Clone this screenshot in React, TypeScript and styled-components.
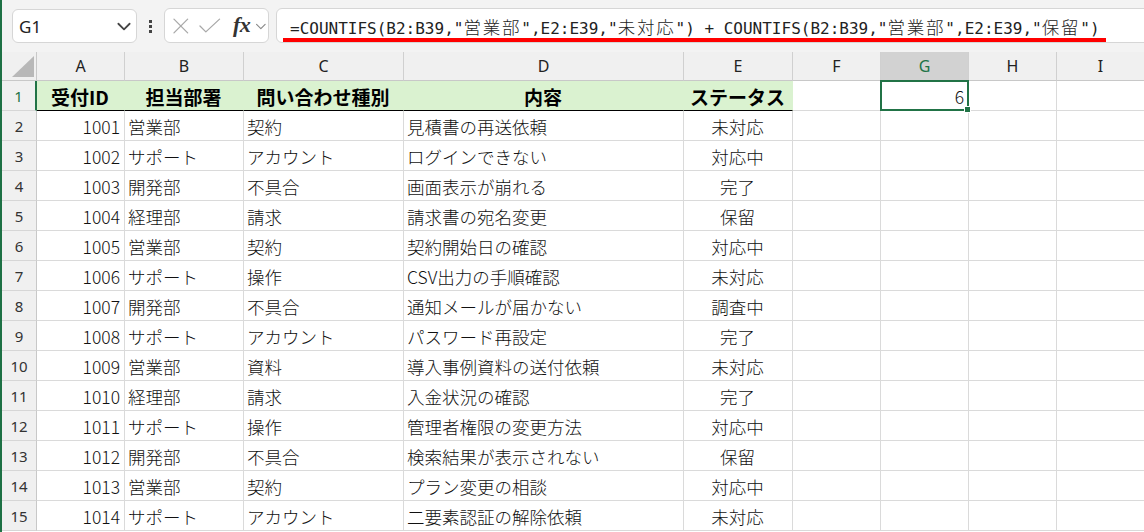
import React from 'react';
import styled, { createGlobalStyle, css } from 'styled-components';

const GlobalStyle = createGlobalStyle`
	html, body {
		margin: 0;
		padding: 0;
		overflow: hidden;
		background: #ffffff;
	}
	* {
		box-sizing: border-box;
	}
`;

const GREEN = '#217346';
const GRID = '#dadada';
const HEAD_BG = '#f0f0f0';

const Window = styled.div`
	width: 1144px;
	height: 532px;
	overflow: hidden;
	border-left: 2px solid #1e7145;
	background: #ffffff;
	display: flex;
	flex-direction: column;
	font-family: 'Noto Sans CJK JP', 'Noto Sans', sans-serif;
`;

const Toolbar = styled.div`
	height: 52px;
	flex: none;
	background: #f3f3f3;
	display: flex;
	align-items: flex-start;
	padding: 9px 0 0 10px;
`;

const NameBox = styled.div`
	width: 125px;
	height: 34px;
	background: #ffffff;
	border: 1px solid #d6d6d6;
	border-radius: 6px;
	display: flex;
	align-items: center;
	justify-content: space-between;
	padding: 0 3px 0 6px;
	font-family: 'Noto Sans', sans-serif;
	font-size: 17px;
	color: #222;
`;

const DotsHandle = styled.div`
	width: 27px;
	height: 34px;
	display: flex;
	flex-direction: column;
	align-items: center;
	justify-content: center;
	gap: 2px;
`;

const Dot = styled.span`
	width: 3px;
	height: 3px;
	background: #444;
`;

const FxBox = styled.div`
	width: 105px;
	height: 35px;
	margin-top: -1px;
	background: #ffffff;
	border: 1px solid #d6d6d6;
	border-radius: 6px;
	display: flex;
	align-items: center;
	padding: 0 0 0 7px;
`;

const IconGap = styled.span`
	width: 9px;
`;

const FxLabel = styled.span`
	font-family: 'Liberation Serif', serif;
	font-style: italic;
	font-weight: bold;
	font-size: 22px;
	color: #333;
	margin: 0 4px 2px 11px;
	letter-spacing: -0.5px;
`;

const FormulaBox = styled.div`
	flex: 1;
	height: 35px;
	margin: -1px -12px 0 7px;
	background: #ffffff;
	border: 1px solid #d6d6d6;
	border-radius: 6px;
	padding: 7px 0 0 6px;
	display: flex;
	align-items: flex-start;
	white-space: nowrap;
	overflow: hidden;
`;

const FormulaText = styled.div`
	flex: none;
	height: 26px;
	padding: 0 6px 0 7px;
	border-bottom: 4px solid #ff0000;
	font-family: 'DejaVu Sans Mono', monospace;
	font-size: 16px;
	line-height: 21px;
	color: #222;
`;

const FormulaCjk = styled.span`
	font-family: 'Noto Sans CJK JP', sans-serif;
	font-size: 17.5px;
	letter-spacing: 1.8px;
	font-weight: 300;
`;

const Sheet = styled.div`
	display: grid;
	grid-template-columns: 35px 88px 119px 160px 280px 109px 88px 88px 88px 88px;
	grid-template-rows: 29px repeat(15, 30px);
`;

const Corner = styled.div`
	background: ${HEAD_BG};
	border-right: 1px solid #c8c8c8;
	border-bottom: 1px solid #c8c8c8;
	display: flex;
	align-items: flex-end;
	justify-content: flex-end;
	padding: 0 2px 3px 0;
`;

const CornerTriangle = styled.span`
	width: 22px;
	height: 21px;
	background: #b8b8b8;
	clip-path: polygon(100% 0, 100% 100%, 0 100%);
`;

const ColHead = styled.div<{ $active?: boolean }>`
	background: ${(p) => (p.$active ? '#d2d2d2' : HEAD_BG)};
	color: ${(p) => (p.$active ? GREEN : '#222')};
	border-right: 1px solid #d0d0d0;
	border-bottom: 1px solid #c8c8c8;
	display: flex;
	align-items: center;
	justify-content: center;
	font-family: 'Noto Sans', sans-serif;
	font-size: 16px;
`;

const RowHead = styled.div<{ $active?: boolean }>`
	background: ${HEAD_BG};
	color: ${(p) => (p.$active ? GREEN : '#333')};
	border-bottom: 1px solid #d6d6d6;
	border-right: ${(p) => (p.$active ? `2px solid ${GREEN}` : '1px solid #c8c8c8')};
	display: flex;
	align-items: center;
	justify-content: center;
	padding-top: 1px;
	font-family: 'Noto Sans', sans-serif;
	font-size: 15px;
`;

type Align = 'left' | 'right' | 'center';

const Cell = styled.div<{ $align?: Align; $title?: boolean }>`
	position: relative;
	border-right: 1px solid ${GRID};
	border-bottom: 1px solid ${GRID};
	display: flex;
	align-items: center;
	padding: 2px 4px 0 3px;
	white-space: nowrap;
	font-size: 17.5px;
	font-weight: 300;
	color: #111;
	justify-content: ${(p) =>
		p.$align === 'right' ? 'flex-end' : p.$align === 'center' ? 'center' : 'flex-start'};
	${(p) =>
		p.$title &&
		css`
			background: #daf2d0;
			border-right-color: #daf2d0;
			border-bottom: 1px solid #000;
			font-weight: bold;
			font-size: 19px;
			justify-content: center;
			color: #000;
		`}
`;

const Selection = styled.span`
	position: absolute;
	left: -1px;
	top: -1px;
	right: -1px;
	bottom: -1px;
	border: 2px solid ${GREEN};
	z-index: 2;
	pointer-events: none;
`;

const FillHandle = styled.span`
	position: absolute;
	right: -4px;
	bottom: -4px;
	width: 7px;
	height: 7px;
	background: ${GREEN};
	border: 1px solid #ffffff;
`;

const columns = ['A', 'B', 'C', 'D', 'E', 'F', 'G', 'H', 'I'];
const titles = ['受付ID', '担当部署', '問い合わせ種別', '内容', 'ステータス'];

const rows: [number, string, string, string, string][] = [
	[1001, '営業部', '契約', '見積書の再送依頼', '未対応'],
	[1002, 'サポート', 'アカウント', 'ログインできない', '対応中'],
	[1003, '開発部', '不具合', '画面表示が崩れる', '完了'],
	[1004, '経理部', '請求', '請求書の宛名変更', '保留'],
	[1005, '営業部', '契約', '契約開始日の確認', '対応中'],
	[1006, 'サポート', '操作', 'CSV出力の手順確認', '未対応'],
	[1007, '開発部', '不具合', '通知メールが届かない', '調査中'],
	[1008, 'サポート', 'アカウント', 'パスワード再設定', '完了'],
	[1009, '営業部', '資料', '導入事例資料の送付依頼', '未対応'],
	[1010, '経理部', '請求', '入金状況の確認', '完了'],
	[1011, 'サポート', '操作', '管理者権限の変更方法', '対応中'],
	[1012, '開発部', '不具合', '検索結果が表示されない', '保留'],
	[1013, '営業部', '契約', 'プラン変更の相談', '対応中'],
	[1014, 'サポート', 'アカウント', '二要素認証の解除依頼', '未対応'],
];

const formula: { t: string; cjk?: boolean }[] = [
	{ t: '=COUNTIFS(B2:B39,"' },
	{ t: '営業部', cjk: true },
	{ t: '",E2:E39,"' },
	{ t: '未対応', cjk: true },
	{ t: '") + COUNTIFS(B2:B39,"' },
	{ t: '営業部', cjk: true },
	{ t: '",E2:E39,"' },
	{ t: '保留', cjk: true },
	{ t: '")' },
];

const Chevron = ({ size, color, width }: { size: number; color: string; width: number }) => (
	<svg width={size} height={size} viewBox="0 0 16 16" fill="none">
		<path d="M3 6l5 5 5-5" stroke={color} strokeWidth={width} strokeLinecap="round" strokeLinejoin="round" />
	</svg>
);

const CancelIcon = () => (
	<svg width="18" height="18" viewBox="0 0 18 18" fill="none">
		<path d="M2 2l14 14M16 2L2 16" stroke="#a8a8a8" strokeWidth="1.3" strokeLinecap="round" />
	</svg>
);

const EnterIcon = () => (
	<svg width="24" height="18" viewBox="0 0 24 18" fill="none">
		<path d="M2 9l6 6L22 2" stroke="#a8a8a8" strokeWidth="1.3" strokeLinecap="round" strokeLinejoin="round" />
	</svg>
);

const App = () => {
	return (
		<>
			<GlobalStyle />
			<Window>
				<Toolbar>
					<NameBox>
						<span>G1</span>
						<Chevron size={18} color="#444" width={1.6} />
					</NameBox>
					<DotsHandle>
						<Dot />
						<Dot />
						<Dot />
					</DotsHandle>
					<FxBox>
						<CancelIcon />
						<IconGap />
						<EnterIcon />
						<FxLabel>fx</FxLabel>
						<Chevron size={14} color="#888" width={1.3} />
					</FxBox>
					<FormulaBox>
						<FormulaText>
							{formula.map((part, i) =>
								part.cjk ? <FormulaCjk key={i}>{part.t}</FormulaCjk> : <span key={i}>{part.t}</span>
							)}
						</FormulaText>
					</FormulaBox>
				</Toolbar>
				<Sheet>
					<Corner>
						<CornerTriangle />
					</Corner>
					{columns.map((c) => (
						<ColHead key={c} $active={c === 'G'}>
							{c}
						</ColHead>
					))}

					<RowHead $active>1</RowHead>
					{titles.map((t) => (
						<Cell key={t} $title>
							{t}
						</Cell>
					))}
					<Cell />
					<Cell $align="right">
						6
						<Selection>
							<FillHandle />
						</Selection>
					</Cell>
					<Cell />
					<Cell />

					{rows.map((r, i) => (
						<React.Fragment key={r[0]}>
							<RowHead>{i + 2}</RowHead>
							<Cell $align="right">{r[0]}</Cell>
							<Cell>{r[1]}</Cell>
							<Cell>{r[2]}</Cell>
							<Cell>{r[3]}</Cell>
							<Cell $align="center">{r[4]}</Cell>
							<Cell />
							<Cell />
							<Cell />
							<Cell />
						</React.Fragment>
					))}
				</Sheet>
			</Window>
		</>
	);
};

export default App;
